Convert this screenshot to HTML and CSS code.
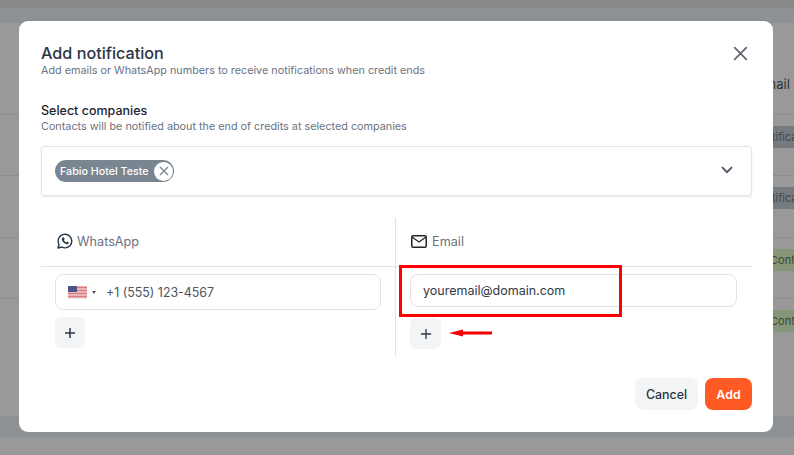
FILE: index.html
```html
<!DOCTYPE html>
<html lang="en">
<head>
<meta charset="utf-8">
<title>Add notification</title>
<link rel="stylesheet" href="styles.css">
</head>
<body>
<div class="page">
  <div class="top-a"></div>
  <div class="top-b"></div>
  <div class="table">
    <div class="row row-head"><span class="cell-text">Email</span></div>
    <div class="row"><span class="tag tag-gray">Notificação</span></div>
    <div class="row"><span class="tag tag-gray">Notificação</span></div>
    <div class="row"><span class="tag tag-green">Contato</span></div>
    <div class="row row-last"><span class="tag tag-green">Contato</span></div>
  </div>
  <div class="bottom-band"></div>
</div>

<div class="modal">
  <header class="modal-head">
    <div>
      <h1 class="title">Add notification</h1>
      <p class="sub sub-head">Add emails or WhatsApp numbers to receive notifications when credit ends</p>
    </div>
    <svg class="close" width="15" height="15" viewBox="0 0 15 15"><path d="M1.2 1.2 13.8 13.8M13.8 1.2 1.2 13.8" stroke="#5f6570" stroke-width="1.7" fill="none"/></svg>
  </header>

  <section class="companies">
    <h2 class="label">Select companies</h2>
    <p class="sub">Contacts will be notified about the end of credits at selected companies</p>
    <div class="select">
      <span class="chip">Fabio Hotel Teste
        <span class="chip-x"><svg width="10" height="10" viewBox="0 0 10 10"><path d="M1 1 9 9M9 1 1 9" stroke="#7a8592" stroke-width="1.3" fill="none"/></svg></span>
      </span>
      <svg class="chev" width="12" height="8" viewBox="0 0 12 8"><path d="M1 1.2 6 6.2 11 1.2" stroke="#4b5260" stroke-width="1.8" fill="none"/></svg>
    </div>
  </section>

  <section class="cols">
    <div class="col col-left">
      <div class="col-head">
        <svg class="wa" width="16" height="16" viewBox="0 0 16 16"><path d="M1 15l1-3.7A6.8 6.8 0 1 1 4.7 14z" fill="none" stroke="#283645" stroke-width="1.4" stroke-linejoin="round"/><path d="M5.6 4.5c-.8.6-1 1.6-.5 2.8.7 1.7 2 3 3.8 3.7 1.1.4 2.1.2 2.6-.6.3-.4.3-.8.2-1l-1.5-.8-.8.9c-1.1-.4-2-1.3-2.5-2.5l.8-.8-.7-1.6c-.2-.2-.8-.2-1.4-.1z" fill="#283645"/></svg>
        <span>WhatsApp</span>
      </div>
      <div class="col-body">
        <div class="field field-phone">
          <svg class="flag" width="19" height="13" viewBox="0 0 19 13"><rect width="19" height="12" fill="#e8b5b8"/><path d="M0 1.5h19M0 4.5h19M0 7.5h19M0 10.5h19" stroke="#d9777f" stroke-width="1.1"/><rect width="9" height="6" fill="#50538a"/><rect y="12" width="19" height="1" fill="#e3e3e5"/></svg>
          <span class="caret"></span>
          <span class="phone">+1 (555) 123-4567</span>
        </div>
        <button class="plus"><svg width="12" height="12" viewBox="0 0 12 12"><path d="M6 1v10M1 6h10" stroke="#2b3a4a" stroke-width="1.5" fill="none"/></svg></button>
      </div>
    </div>
    <div class="col col-right">
      <div class="col-head">
        <svg class="mail" width="16" height="13" viewBox="0 0 16 13"><rect x=".8" y=".8" width="14.4" height="11.4" rx="1.2" fill="none" stroke="#22262c" stroke-width="1.5"/><path d="M1 2l7 5 7-5" fill="none" stroke="#22262c" stroke-width="1.3"/></svg>
        <span>Email</span>
      </div>
      <div class="col-body">
        <div class="field field-email">youremail@domain.com</div>
        <button class="plus"><svg width="12" height="12" viewBox="0 0 12 12"><path d="M6 1v10M1 6h10" stroke="#2b3a4a" stroke-width="1.3" fill="none"/></svg></button>
      </div>
    </div>
  </section>

  <footer class="actions">
    <button class="btn btn-cancel">Cancel</button>
    <button class="btn btn-add">Add</button>
  </footer>
</div>

<div class="mark-box"></div>
<svg class="mark-arrow" width="44" height="10" viewBox="0 0 44 10"><path d="M0 5 14 1.5V3.6H43V6.4H14V8.5Z" fill="#f00000"/></svg>
</body>
</html>
```
FILE: styles.css
```css
* { box-sizing: border-box; }
html, body { margin: 0; height: 455px; overflow: hidden; }
body { font-family: Inter, "Liberation Sans", sans-serif; background: #999999; position: relative; }
h1, h2, p { margin: 0; }
button { font-family: inherit; border: 0; padding: 0; }

.page { height: 455px; display: flex; flex-direction: column; background: #999999; }
.top-a { height: 8px; background: #87898b; flex: none; }
.top-b { height: 15px; background: #8e9193; flex: none; }
.table { height: 393px; flex: none; display: flex; flex-direction: column; padding-top: 30px; overflow: hidden; }
.row { height: 61.3px; flex: none; border-bottom: 1px solid #8b8c8d; display: flex; align-items: flex-start; white-space: nowrap; }
.row-head { height: 62px; align-items: center; }
.row-last { border-bottom: 0; }
.cell-text { font-size: 13px; color: #2f3236; margin-left: 757px; }
.tag { margin-top: 11px; height: 22px; line-height: 22px; padding: 0 10px; font-size: 11px; }
.tag-gray { background: #767b80; color: #43474b; margin-left: 747px; }
.tag-green { background: #85957a; color: #3a4a2c; margin-left: 760px; }
.bottom-band { height: 21px; background: #8e9193; flex: none; }

.modal { position: absolute; left: 19px; top: 21px; width: 754px; height: 411px; background: #fff; border-radius: 9px; padding: 22px 21px 22px 22px; display: flex; flex-direction: column; }
.modal-head { display: flex; justify-content: space-between; align-items: flex-start; }
.title { font-size: 16.2px; line-height: 20px; font-weight: 500; color: #2b3543; }
.sub { font-size: 10.8px; line-height: 14px; color: #6b7280; }
.sub-head { margin-top: 1px; }
.close { margin: 3px 4px 0 0; }

.companies { margin-top: 24px; }
.label { font-size: 12.5px; line-height: 17px; font-weight: 500; color: #1d2430; margin-bottom: 1px; }
.select { margin-top: 12px; height: 50px; border: 1px solid #e4e5e7; border-radius: 3px; box-shadow: 0 1px 2px rgba(0,0,0,.1); display: flex; align-items: center; justify-content: space-between; padding: 0 18px 0 13px; }
.chip { height: 22px; width: 119px; border-radius: 11px; background: #7a8592; color: #fff; font-size: 10.7px; font-weight: 500; display: flex; align-items: center; justify-content: space-between; padding-left: 5px; white-space: nowrap; }
.chip-x { width: 19px; height: 19px; margin-right: 1px; border-radius: 50%; background: #fff; display: flex; align-items: center; justify-content: center; }
.chev { margin-bottom: 2px; }

.cols { margin-top: 22px; display: grid; grid-template-columns: 355px 356px; height: 138px; }
.col-left { border-right: 1px solid #e1e2e4; }
.col-head { height: 49px; border-bottom: 1px solid #e1e2e4; display: flex; align-items: center; padding: 0 0 2px 15px; gap: 5px; font-size: 12.7px; color: #6b7280; }
.col-left .col-head { padding-left: 16px; gap: 4px; }
.col-body { padding: 7px 14px 0; display: flex; flex-direction: column; align-items: flex-start; }
.field { border: 1px solid #e1e2e4; border-radius: 8px; width: 100%; display: flex; align-items: center; }
.field-phone { height: 36px; padding-left: 12px; font-size: 12.4px; color: #4b5563; }
.caret { width: 0; height: 0; margin-left: 5px; border: 2.5px solid transparent; border-top: 3px solid #555; border-bottom: 0; }
.phone { margin-left: 10px; }
.field-email { height: 33px; padding-left: 12px; font-size: 12.5px; color: #2f3946; }
.plus { width: 30px; height: 31px; margin-top: 7px; border-radius: 6px; background: #f3f4f6; display: flex; align-items: center; justify-content: center; }
.col-right .field { width: 327px; }
.col-right .plus { margin-top: 11px; width: 31px; }

.actions { margin-top: 22px; display: flex; justify-content: flex-end; gap: 7px; }
.btn { height: 32px; border-radius: 8px; font-size: 12.4px; font-weight: 500; }
.btn-cancel { width: 63px; background: #f3f4f6; color: #283442; }
.btn-add { width: 47px; background: #ff5a24; color: #fff; font-weight: 600; }

.mark-box { position: absolute; left: 399px; top: 265px; width: 223px; height: 52px; border: 3px solid #ff0000; }
.mark-arrow { position: absolute; left: 449px; top: 328px; }
```
